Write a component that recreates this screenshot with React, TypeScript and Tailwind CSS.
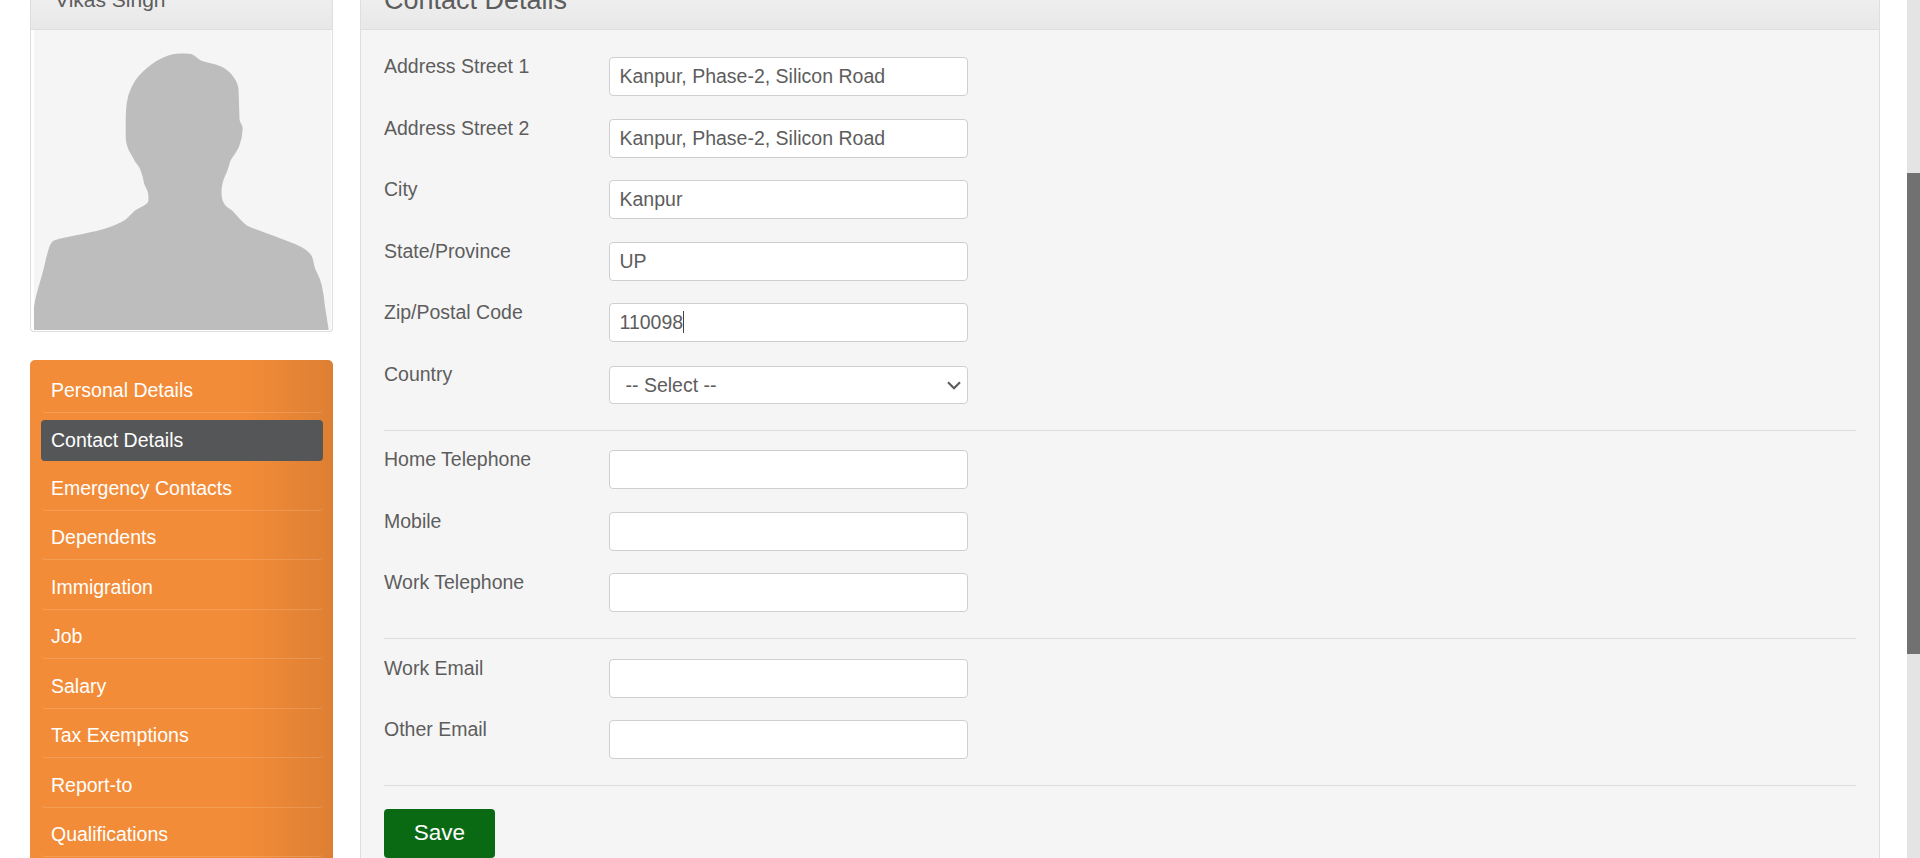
import React from "react";

type Field = { label: string; value?: string; caret?: boolean };

const addressFields: Field[] = [
  { label: "Address Street 1", value: "Kanpur, Phase-2, Silicon Road" },
  { label: "Address Street 2", value: "Kanpur, Phase-2, Silicon Road" },
  { label: "City", value: "Kanpur" },
  { label: "State/Province", value: "UP" },
  { label: "Zip/Postal Code", value: "110098", caret: true },
];
const phoneFields: Field[] = [
  { label: "Home Telephone" },
  { label: "Mobile" },
  { label: "Work Telephone" },
];
const emailFields: Field[] = [{ label: "Work Email" }, { label: "Other Email" }];

const menuAfterActive = [
  "Emergency Contacts",
  "Dependents",
  "Immigration",
  "Job",
  "Salary",
  "Tax Exemptions",
  "Report-to",
  "Qualifications",
];

function Row({ label, value = "", caret }: Field) {
  return (
    <div className="flex h-[61.5px] items-start">
      <label className="-mt-[2px] w-[225px] shrink-0 leading-[22px]">{label}</label>
      <div className="relative">
        <input
          type="text"
          defaultValue={value}
          className="block h-[39px] w-[359px] rounded-[4px] border border-[#cfcfcf] bg-white px-[9.5px] text-[19.5px] text-[#5d5d5d] outline-none"
        />
        {caret && <span className="absolute left-[74px] top-2 h-[22px] w-px bg-[#444]" />}
      </div>
    </div>
  );
}

function Avatar() {
  return (
    <svg viewBox="34 30 297 300" className="block h-[300px] w-[297px] bg-[#f5f5f5]">
      <path
        fill="#bdbdbd"
        d="M34 330V307C36 292 42 278 45 263Q47 254 49.300 247Q51 242 54 240.500C68 236 86 234 103 229.300Q117 225 125 220C130 216.500 133 211.500 137 209.300Q143 206.500 147 203.500C149 201 148.500 199 148.300 195C148 190 145 187 144 183C143 177 142 174 140 169C138.500 165 136.500 164 135 161.500C132 155 129 152 127.500 147Q125.700 143 125.700 136.700V120Q125.700 111 126.700 103.300Q128 94 131.700 86.700Q137 76 146.700 68.300Q155 61 163.300 57.500Q172 53.800 180 53.600Q188 53.200 192 54.200C195.500 55.500 198 59.500 202 61C208 63 215 63.500 221.700 66.700Q229 70.500 233.300 76.700Q238 83 238.500 89C239 99 239.200 110 239.500 119C240 123.500 242.700 124.500 242.700 128.500Q242.500 138 239 146.700C237 151.500 231.500 158 230 161.700C228.500 168 227 172 225 176C222.500 182 221.500 187 221.500 192Q221.300 200 225 205C227.500 208 231 209 233.300 211.700C238.500 217 242 222.500 247.700 226C262 232 279 237.500 295 244Q308 249.500 311.700 256C314 261 313.500 265 315.700 270Q320 278 321.700 285Q324 295 325 306.700L328.700 330Z"
      />
    </svg>
  );
}

function MenuItem({ text }: { text: string }) {
  return (
    <div className="flex h-[49.5px] flex-col justify-end">
      <a className="flex h-[41px] items-center rounded-[4px] border-b border-white/15 pb-[2.4px] pl-[10px]">
        {text}
      </a>
    </div>
  );
}

export default function App() {
  return (
    <div className="flex h-[858px] w-full overflow-hidden bg-white font-['Liberation_Sans',Arial,sans-serif] text-[19.5px] text-[#5d5d5d]">
      <aside className="ml-[30px] w-[303px] shrink-0">
        <div className="h-[332px] rounded-b-[4px] border border-t-0 border-[#dedede] bg-white">
          <div className="flex h-[30px] items-start border-b border-[#dedede] bg-linear-to-b from-[#eeeeee] to-[#e8e8e8] pl-[24px]">
            <h1 className="-mt-3 text-[21px] leading-[24px]">Vikas Singh</h1>
          </div>
          <div className="pl-[3px]">
            <Avatar />
          </div>
        </div>
        <nav className="mt-7 h-[520px] rounded-t-[5px] bg-linear-to-r from-[#f38c38] from-70% to-[#dd7f33] pl-[11px] pr-[10px] text-white">
          <div className="flex h-[53px] flex-col justify-end">
            <a className="flex h-[41px] items-center rounded-[4px] border-b border-white/15 pb-[2px] pl-[10px]">
              Personal Details
            </a>
          </div>
          <div className="mt-[7px] flex h-[41px] items-center rounded-[4px] bg-[#555658] pl-[10px]">
            Contact Details
          </div>
          {menuAfterActive.map((m) => (
            <MenuItem key={m} text={m} />
          ))}
        </nav>
      </aside>
      <main className="ml-[27px] w-[1520px] shrink-0 border-x border-[#dedede] bg-[#f5f5f5]">
        <div className="flex h-[30px] items-start border-b border-[#dedede] bg-linear-to-b from-[#eeeeee] to-[#e8e8e8] pl-[23px]">
          <h1 className="-mt-[15px] text-[27px] leading-[30px]">Contact Details</h1>
        </div>
        <form className="px-[23px]">
          <section className="h-[401px] border-b border-[#dddddd] pt-[27px]">
            {addressFields.map((f) => (
              <Row key={f.label} {...f} />
            ))}
            <div className="flex items-start">
              <label className="-mt-[2px] w-[225px] shrink-0 leading-[22px]">Country</label>
              <div className="mt-[1.500px] flex h-[38px] w-[359px] items-center justify-between rounded-[4px] border border-[#cfcfcf] bg-white pl-[15.5px] pr-[6px]">
                <span className="pt-px">-- Select --</span>
                <svg viewBox="0 0 14 9" className="h-[9px] w-[14px]" fill="none" stroke="#5d5d5d" strokeWidth="2.200">
                  <path d="M1 1.200L7 7.200L13 1.200" />
                </svg>
              </div>
            </div>
          </section>
          <section className="h-[208px] border-b border-[#dddddd] pt-[19px]">
            {phoneFields.map((f) => (
              <Row key={f.label} {...f} />
            ))}
          </section>
          <section className="h-[147px] border-b border-[#dddddd] pt-[19.5px]">
            {emailFields.map((f) => (
              <Row key={f.label} {...f} />
            ))}
          </section>
          <button
            type="button"
            className="mt-[23px] block h-[49px] w-[111px] rounded-[4px] bg-[#0a6a14] text-[22.5px] leading-none text-white"
          >
            Save
          </button>
        </form>
      </main>
      <div className="ml-auto w-[13px] bg-[#e4e4e4] pt-[173px]">
        <div className="h-[481px] bg-[#717171]" />
      </div>
    </div>
  );
}
